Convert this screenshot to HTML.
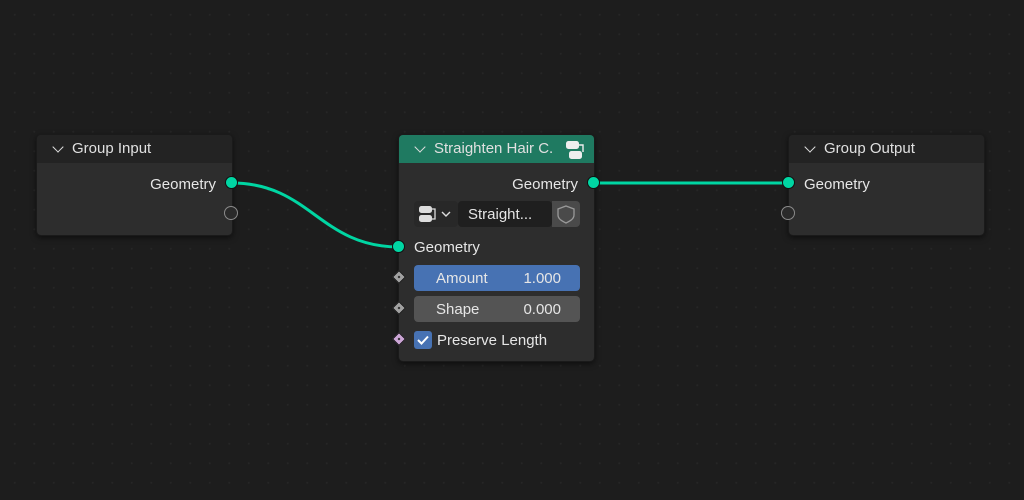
<!DOCTYPE html>
<html><head><meta charset="utf-8"><style>
*{margin:0;padding:0;box-sizing:border-box}
body{width:1024px;height:500px;overflow:hidden;background:#1d1d1d;font-family:"Liberation Sans",sans-serif;font-size:15px;color:#e6e6e6;position:relative;
background-image:radial-gradient(circle,#262626 0.8px,transparent 1.2px);background-size:19.5px 19.5px;background-position:5px 5px}
.node{position:absolute;background:#2d2d2d;border-radius:5px;box-shadow:0 2px 6px rgba(0,0,0,.5);border:1px solid #1a1a1a}
.hdr{height:28px;background:#232323;border-radius:4px 4px 0 0;padding-left:35px;line-height:28px;position:relative;color:#e0e0e0}
.hdr:before{content:"";position:absolute;left:17px;top:8px;width:7px;height:7px;border-right:1.6px solid #ddd;border-bottom:1.6px solid #ddd;transform:rotate(45deg)}
.t{position:absolute;white-space:nowrap}
.sock{position:absolute;width:13px;height:13px;border-radius:50%;background:#00d6a3;border:1px solid #111}
.empty{position:absolute;width:14px;height:14px;border-radius:50%;border:1.5px solid #8a8a8a;background:#2a2a2a}
.dia{position:absolute;width:10px;height:10px;transform:rotate(45deg);border:1px solid #111}
.dia:after{content:"";position:absolute;left:3px;top:3px;width:2px;height:2px;background:#222}
.fld{position:absolute;height:26px;border-radius:4px;line-height:27px}
</style></head><body>
<svg width="1024" height="500" style="position:absolute;left:0;top:0">
<path d="M232 183 C 310 183, 320 247, 399 247" stroke="#00d6a3" stroke-width="3" fill="none"/>
<path d="M594 183 L789 183" stroke="#00d6a3" stroke-width="3" fill="none"/>
</svg>

<div class="node" style="left:36px;top:134px;width:197px;height:102px">
<div class="hdr">Group Input</div>
<div class="t" style="right:16px;top:41px">Geometry</div>
</div>
<div class="sock" style="left:225px;top:176px"></div>
<div class="empty" style="left:224px;top:206px"></div>

<div class="node" style="left:788px;top:134px;width:197px;height:102px">
<div class="hdr">Group Output</div>
<div class="t" style="left:15px;top:41px">Geometry</div>
</div>
<div class="sock" style="left:782px;top:176px"></div>
<div class="empty" style="left:781px;top:206px"></div>

<div class="node" style="left:398px;top:134px;width:197px;height:228px">
<div class="hdr" style="background:#1f7a61">Straighten Hair C.</div>
<svg width="26" height="26" style="position:absolute;left:163px;top:2px"><rect x="4" y="4" width="13" height="8" rx="2.5" fill="#eee"/><rect x="7" y="14" width="13" height="8" rx="2.5" fill="#eee"/><path d="M17 8h4v7" stroke="#eee" fill="none" stroke-width="1.4"/></svg>
<div class="t" style="right:16px;top:41px">Geometry</div>
<div class="fld" style="left:15px;top:66px;width:44px;background:#282828"><svg width="44" height="26"><rect x="5" y="5" width="13" height="7" rx="2.5" fill="#ddd"/><rect x="5" y="14" width="13" height="7" rx="2.5" fill="#ddd"/><path d="M18 8h3v10h-3" stroke="#ddd" fill="none" stroke-width="1.3"/><path d="M28 11l4 4 4-4" stroke="#ddd" fill="none" stroke-width="1.4"/></svg></div>
<div class="fld" style="left:59px;top:66px;width:94px;background:#1f1f1f;padding-left:10px">Straight...</div>
<div class="fld" style="left:153px;top:66px;width:28px;background:#4a4a4a;border-radius:0 4px 4px 0"><svg width="28" height="26"><path d="M14 5l8 3v6c0 4-4 6-8 8-4-2-8-4-8-8V8z" stroke="#999" fill="none" stroke-width="1.3"/></svg></div>
<div class="t" style="left:15px;top:104px">Geometry</div>
<div class="fld" style="left:15px;top:130px;width:166px;background:#4772b3;padding:0 19px 0 22px"><span>Amount</span><span style="float:right">1.000</span></div>
<div class="fld" style="left:15px;top:161px;width:166px;background:#545454;padding:0 19px 0 22px"><span>Shape</span><span style="float:right">0.000</span></div>
<div style="position:absolute;left:15px;top:196px;width:18px;height:18px;background:#4772b3;border-radius:3px"><svg width="18" height="18"><path d="M4 9l3.5 3.5L14 5.5" stroke="#fff" stroke-width="2" fill="none"/></svg></div>
<div class="t" style="left:38px;top:197px">Preserve Length</div>
</div>
<div class="sock" style="left:587px;top:176px"></div>
<div class="sock" style="left:392px;top:240px"></div>
<div class="dia" style="left:394px;top:272px;background:#a1a1a1"></div>
<div class="dia" style="left:394px;top:303px;background:#a1a1a1"></div>
<div class="dia" style="left:394px;top:334px;background:#cca6d6"></div>
</body></html>
